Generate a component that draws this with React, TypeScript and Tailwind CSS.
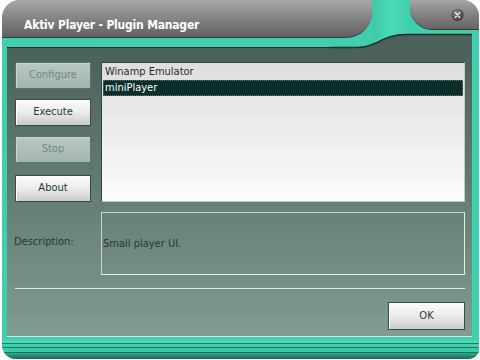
export default function App() {
  return (
    <div className="w-[480px] h-[360px] bg-white font-['DejaVu_Sans_Condensed','DejaVu_Sans',sans-serif] font-stretch-condensed">
      <div className="relative ml-[2px] w-[477px] h-[359px] bg-[#3fcfae] rounded-tl-[18px] rounded-tr-[16px] rounded-bl-[14px] rounded-br-[10px] overflow-hidden flex flex-col">
        {/* title row */}
        <div className="h-[38px] flex items-start">
          <div className="w-[370px] h-[38px] rounded-tl-[16px] rounded-br-[26px] bg-gradient-to-b from-[#a9a9a9] via-[#858383] to-[#626060] border-b border-[#3c3a3a] flex items-center pt-[12px] pl-[22px]">
            <span className="text-white font-bold text-[12px] tracking-[-0.2px]">Aktiv Player - Plugin Manager</span>
          </div>
          <div className="flex-1 h-[38px] bg-gradient-to-r from-[#3cc8a7] via-[#4ad9b8] to-[#3fcfae]" />
          <div className="w-[69px] h-[30px] rounded-bl-[22px] rounded-tr-[16px] bg-gradient-to-b from-[#a6a6a6] via-[#838181] to-[#666464] border-b border-[#3c3a3a] flex items-start justify-end pt-[8px] pr-[15px]">
            <svg width="13" height="14" viewBox="0 0 13 14">
              <defs>
                <radialGradient id="cb" cx="40%" cy="35%" r="65%">
                  <stop offset="0%" stopColor="#8a8888" />
                  <stop offset="100%" stopColor="#3e3c3c" />
                </radialGradient>
              </defs>
              <circle cx="6.5" cy="7" r="6.2" fill="url(#cb)" />
              <path d="M4.3 4.6 L8.7 9.4 M8.7 4.6 L4.3 9.4" stroke="#f4f4f4" strokeWidth="1.4" strokeLinecap="round" />
            </svg>
          </div>
        </div>

        {/* curve of the body's top edge */}
        <svg className="absolute left-[328px] top-[28px]" width="142" height="21" viewBox="0 0 142 21">
          <path d="M0 21 L0 19 L27 19 C47 19 52 6 77 6 L142 6 L142 21 Z" fill="#4b625b" />
          <path d="M0 19.5 L27 19.5 C47 19.5 52 6.5 77 6.5 L142 6.5" fill="none" stroke="#1d2a27" strokeWidth="1.3" />
        </svg>

        {/* body */}
        <div className="mt-[9px] ml-[5px] w-[465px] h-[290px] bg-gradient-to-b from-[#4a6159] to-[#809b90] border-t border-[#1d2a27] border-b border-b-[#d7e2dc] flex flex-col text-[11px] text-[#1d3b36]">
          <div className="flex mt-[14px] pl-[8px] pr-[7px]">
            <div className="w-[76px] flex flex-col">
              <button className="h-[27px] border border-[#5b736a] bg-gradient-to-b from-[#b9c9c1] to-[#a2b5ac] text-[#6e8b81] shadow-[inset_1px_1px_0_#c9d6cf]">
                Configure
              </button>
              <button className="mt-[10px] h-[27px] border border-[#3a4a45] bg-gradient-to-b from-[#fbfbfb] via-[#ebebeb] to-[#c9cac9] text-[#1d3b36] shadow-[inset_1px_1px_0_#ffffff]">
                Execute
              </button>
              <button className="mt-[10px] h-[27px] border border-[#5b736a] bg-gradient-to-b from-[#b9c9c1] to-[#a2b5ac] text-[#6e8b81] shadow-[inset_1px_1px_0_#c9d6cf]">
                Stop
              </button>
              <button className="mt-[12px] h-[27px] border border-[#3a4a45] bg-gradient-to-b from-[#fbfbfb] via-[#ebebeb] to-[#c9cac9] text-[#1d3b36] shadow-[inset_1px_1px_0_#ffffff]">
                About
              </button>
            </div>
            <div className="ml-[10px] w-[364px] h-[140px] border border-[#33443f] border-r-[#c2ccc7] border-b-[#c2ccc7] bg-gradient-to-b from-[#dedede] to-[#fcfcfc] pt-[1px] px-[1px] text-[#1f2f2d]">
              <div className="h-[16px] pl-[2px] flex items-center">Winamp Emulator</div>
              <div className="h-[16px] pl-[2px] flex items-center bg-[#0d2f2b] text-white outline-1 outline-dotted outline-[#5d7a72] -outline-offset-1">miniPlayer</div>
            </div>
          </div>

          <div className="flex mt-[10px] pl-[7px] pr-[7px]">
            <div className="w-[80px] flex items-center pb-[3px]">Description:</div>
            <div className="ml-[7px] w-[364px] h-[63px] border border-[#cfd1c2] border-r-[#e6ebe6] border-b-[#e6ebe6] flex items-center pl-[1px] pt-[1px]">
              Small player UI.
            </div>
          </div>

          <div className="mt-[13px] ml-[8px] w-[450px] h-[2px] border-t border-[#e4ebe6] border-b border-b-[#6f8a80]" />

          <div className="flex justify-end mt-[12px] pr-[7px]">
            <button className="w-[77px] h-[28px] border border-[#3a4a45] bg-gradient-to-b from-[#fbfbfb] via-[#ebebeb] to-[#c9cac9] text-[#1d3b36] shadow-[inset_1px_1px_0_#ffffff]">
              OK
            </button>
          </div>
        </div>

        {/* bottom frame bands */}
        <div className="flex-1 flex flex-col pt-[3px]">
          <div className="h-[3px] bg-[#47d8b6]" />
          <div className="h-[1px] bg-[#1f7a66]" />
          <div className="h-[3px] bg-[#3fcfae]" />
          <div className="h-[1px] bg-[#1f7a66]" />
          <div className="h-[4px] bg-[#3cc9a8]" />
          <div className="h-[1px] bg-[#1c6e5c]" />
          <div className="flex-1 bg-gradient-to-b from-[#2fae90] to-[#1b6655]" />
        </div>
      </div>
    </div>
  )
}
